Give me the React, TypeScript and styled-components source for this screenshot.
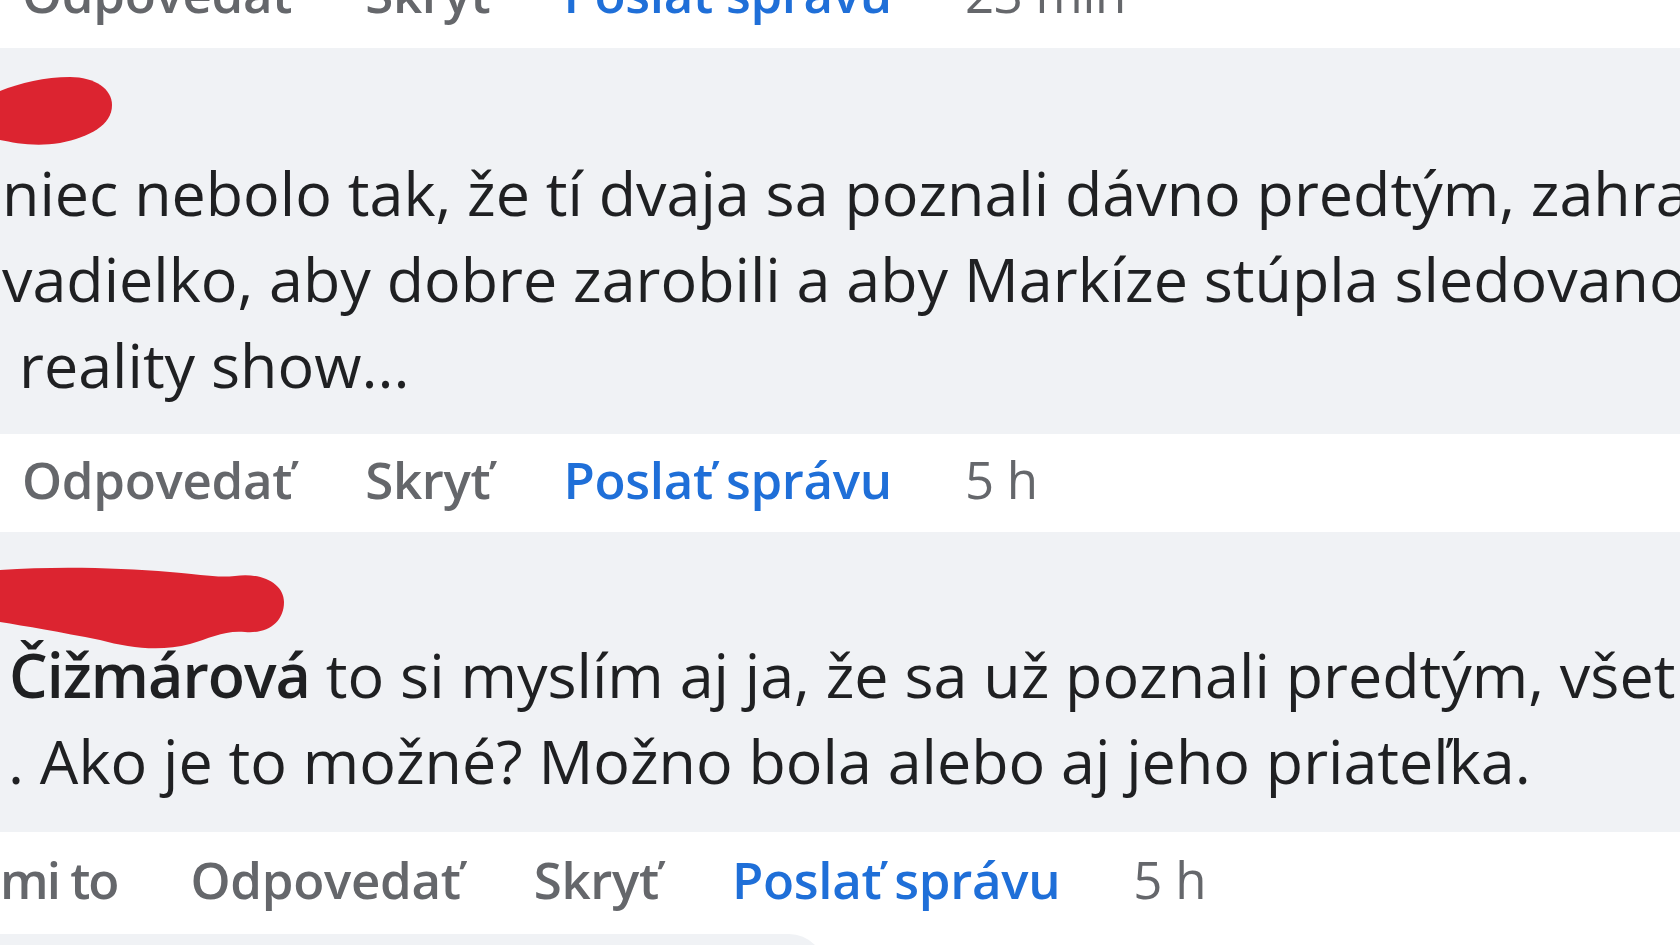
import React from "react";
import styled, { createGlobalStyle } from "styled-components";

const Global = createGlobalStyle`
  html, body { margin: 0; padding: 0; background: #ffffff; }
  body { overflow: hidden; }
`;

const Page = styled.div`
  width: 1680px;
  height: 945px;
  overflow: hidden;
  background: #ffffff;
  font-family: "Open Sans", "Noto Sans", sans-serif;
`;

const Feed = styled.div`
  display: flex;
  flex-direction: column;
  margin-top: -54px;
`;

const Bubble = styled.div<{ $width?: number; $padBottom?: number }>`
  background: #f0f2f5;
  width: ${(p) => (p.$width ? `${p.$width}px` : "1760px")};
  min-height: 40px;
  padding-bottom: ${(p) => p.$padBottom ?? 26}px;
  border-top-right-radius: 36px;
  border-bottom-right-radius: 36px;
`;

const NameRow = styled.div<{ $h: number }>`
  height: ${(p) => p.$h}px;
  display: flex;
  align-items: flex-start;
  overflow: visible;
`;

const Blot = styled.svg<{ $top: number }>`
  display: block;
  margin-top: ${(p) => p.$top}px;
  overflow: visible;
  flex-shrink: 0;
`;

const Line = styled.div<{ $indent?: number }>`
  font-size: 61px;
  line-height: 86px;
  height: 86px;
  color: #1f2022;
  white-space: nowrap;
  padding-left: ${(p) => p.$indent ?? 0}px;
`;

const Name = styled.span`
  font-weight: 600;
  letter-spacing: -1px;
`;

const ActionRow = styled.div<{ $h: number }>`
  height: ${(p) => p.$h}px;
  display: flex;
  align-items: center;
  gap: 73px;
  padding-bottom: 8px;
  box-sizing: border-box;
  background: #ffffff;
`;

const Action = styled.span<{ $tone?: "link" | "muted"; $first?: boolean; $tight?: boolean }>`
  font-size: 51px;
  line-height: 1;
  font-weight: ${(p) => (p.$tone === "muted" ? 400 : 600)};
  letter-spacing: ${(p) => (p.$tight ? "-2px" : "-0.3px")};
  white-space: nowrap;
  color: ${(p) => (p.$tone === "link" ? "#1f6fd8" : "#65676b")};
  margin-left: ${(p) => (p.$first ? "22px" : "0")};
`;

function Actions({ h, time, lead }: { h: number; time: string; lead?: string }) {
  return (
    <ActionRow $h={h}>
      {lead && <Action $tight>{lead}</Action>}
      <Action $first={!lead}>Odpovedať</Action>
      <Action>Skryť</Action>
      <Action $tone="link">Poslať správu</Action>
      <Action $tone="muted">{time}</Action>
    </ActionRow>
  );
}

export default function App() {
  return (
    <Page>
      <Global />
      <Feed>
        <Actions h={102} time="23 min" />

        <Bubble $padBottom={26}>
          <NameRow $h={102}>
            <Blot $top={29} width={112} height={68} viewBox="0 0 112 68">
              <path
                d="M0 14 C20 6 45 0 70 0 C95 0 112 12 112 28 C112 48 90 60 60 66 C35 70 15 66 0 63 Z"
                fill="#dc2430"
              />
            </Blot>
          </NameRow>
          <Line $indent={2}>niec nebolo tak, že tí dvaja sa poznali dávno predtým, zahrali</Line>
          <Line $indent={2}>vadielko, aby dobre zarobili a aby Markíze stúpla sledovanosť</Line>
          <Line $indent={19}>reality show...</Line>
        </Bubble>

        <Actions h={98} time="5 h" />

        <Bubble $padBottom={28}>
          <NameRow $h={100}>
            <Blot $top={30} width={284} height={88} viewBox="0 0 284 88">
              <path
                d="M0 8 C60 4 120 6 170 10 C200 12 215 16 235 14 C262 10 284 22 284 40 C284 60 268 72 245 70 C225 68 210 76 190 82 C160 90 130 86 100 78 C60 70 25 64 0 60 Z"
                fill="#dc2430"
              />
            </Blot>
          </NameRow>
          <Line $indent={9}>
            <Name>Čižmárová</Name> to si myslím aj ja, že sa už poznali predtým, všetko
          </Line>
          <Line $indent={8}>. Ako je to možné? Možno bola alebo aj jeho priateľka.</Line>
        </Bubble>

        <Actions h={102} time="5 h" lead="mi to" />

        <Bubble $width={825} $padBottom={60} />
      </Feed>
    </Page>
  );
}
